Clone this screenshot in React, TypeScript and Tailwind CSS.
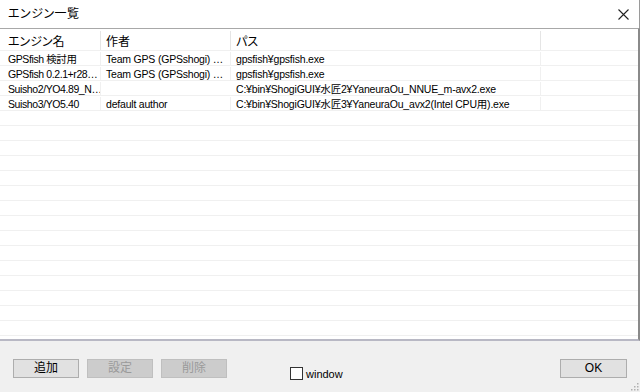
import React from "react";

type Engine = {
  name: string;
  author: string;
  path: string;
};

const engines: Engine[] = [
  { name: "GPSfish 検討用", author: "Team GPS (GPSshogi) …", path: "gpsfish¥gpsfish.exe" },
  { name: "GPSfish 0.2.1+r28…", author: "Team GPS (GPSshogi) …", path: "gpsfish¥gpsfish.exe" },
  { name: "Suisho2/YO4.89_N…", author: "", path: "C:¥bin¥ShogiGUI¥水匠2¥YaneuraOu_NNUE_m-avx2.exe" },
  { name: "Suisho3/YO5.40", author: "default author", path: "C:¥bin¥ShogiGUI¥水匠3¥YaneuraOu_avx2(Intel CPU用).exe" },
];

const font = "[font-family:'Liberation_Sans','Noto_Sans_CJK_JP',sans-serif]";

const Cells = ({ a, b, c }: { a: string; b: string; c: string }) => (
  <>
    <div className="w-[101px] shrink-0 border-r border-[#f0f0f0] pl-[8px] pr-[1px] whitespace-nowrap overflow-hidden tracking-[-0.4px]">{a}</div>
    <div className="w-[130px] shrink-0 border-r border-[#f0f0f0] pl-[5px] whitespace-nowrap overflow-hidden">{b}</div>
    <div className="w-[310px] shrink-0 border-r border-[#f0f0f0] pl-[5px] whitespace-nowrap overflow-hidden">{c}</div>
    <div className="flex-1" />
  </>
);

export default function App() {
  const rows = [...engines, ...Array.from({ length: 16 }, () => null)];

  return (
    <div className={`w-[640px] h-[392px] flex flex-col bg-[#f0f0f0] text-black text-[12px] ${font} overflow-hidden relative`}>
      {/* title bar */}
      <div className="h-[28px] bg-white flex items-center pl-[8px] pr-[10px] border-r border-[#9a9a9a] shrink-0">
        <span className="[font-feature-settings:'palt'] tracking-[0.5px]">エンジン一覧</span>
        <svg className="ml-auto" width="11" height="11" viewBox="0 0 11 11">
          <path d="M0.5 0.5 L10.5 10.5 M10.5 0.5 L0.5 10.5" stroke="#222" strokeWidth="1.1" fill="none" />
        </svg>
      </div>

      {/* list view */}
      <div className="h-[313px] shrink-0 bg-white border-t border-[#a8a8a8] border-r-2 border-r-[#8a8a8a] border-b-2 border-b-[#b8b8c4] overflow-hidden">
        <div className="h-[21px] flex leading-[22px] pt-[2px]">
          <div className="w-[101px] shrink-0 border-r border-[#e5e5e5] pl-[8px] [font-feature-settings:'palt']">エンジン名</div>
          <div className="w-[130px] shrink-0 border-r border-[#e5e5e5] pl-[5px] [font-feature-settings:'palt']">作者</div>
          <div className="w-[310px] shrink-0 border-r border-[#e5e5e5] pl-[5px] [font-feature-settings:'palt']">パス</div>
          <div className="flex-1" />
        </div>
        {rows.map((r, i) => (
          <div key={i} className="h-[15px] flex items-center leading-[14px] pt-[1px] border-t border-[#f0f0f0] text-[10.5px] tracking-[-0.2px]">
            <Cells a={r ? r.name : ""} b={r ? r.author : ""} c={r ? r.path : ""} />
          </div>
        ))}
      </div>

      {/* footer */}
      <div className="flex-1 flex items-start pt-[18px] pl-[13px] pr-[13px]">
        <button className="w-[66px] h-[19px] bg-[#e1e1e1] border border-[#adadad] text-[12px] leading-[17px]">追加</button>
        <button disabled className="ml-[8px] w-[66px] h-[19px] bg-[#cccccc] border border-[#bfbfbf] text-[#9a9a9a] text-[12px] leading-[17px]">設定</button>
        <button disabled className="ml-[8px] w-[66px] h-[19px] bg-[#cccccc] border border-[#bfbfbf] text-[#9a9a9a] text-[12px] leading-[17px]">削除</button>
        <label className="ml-[63px] mt-[7px] flex items-center gap-[3px]">
          <span className="w-[13px] h-[13px] bg-white border border-[#333]" />
          <span className="leading-[13px] mt-[2px] text-[11px]">window</span>
        </label>
        <button className="ml-auto w-[67px] h-[19px] bg-[#e1e1e1] border border-[#adadad] text-[12px] leading-[17px]">OK</button>
      </div>

      {/* size grip */}
      <svg className="absolute right-[1px] bottom-[1px]" width="10" height="10" viewBox="0 0 10 10">
        <g fill="#b0b0b0">
          <rect x="8" y="2" width="1.5" height="1.5" />
          <rect x="5" y="5" width="1.5" height="1.5" />
          <rect x="8" y="5" width="1.5" height="1.5" />
          <rect x="2" y="8" width="1.5" height="1.5" />
          <rect x="5" y="8" width="1.5" height="1.5" />
          <rect x="8" y="8" width="1.5" height="1.5" />
        </g>
      </svg>
    </div>
  );
}
